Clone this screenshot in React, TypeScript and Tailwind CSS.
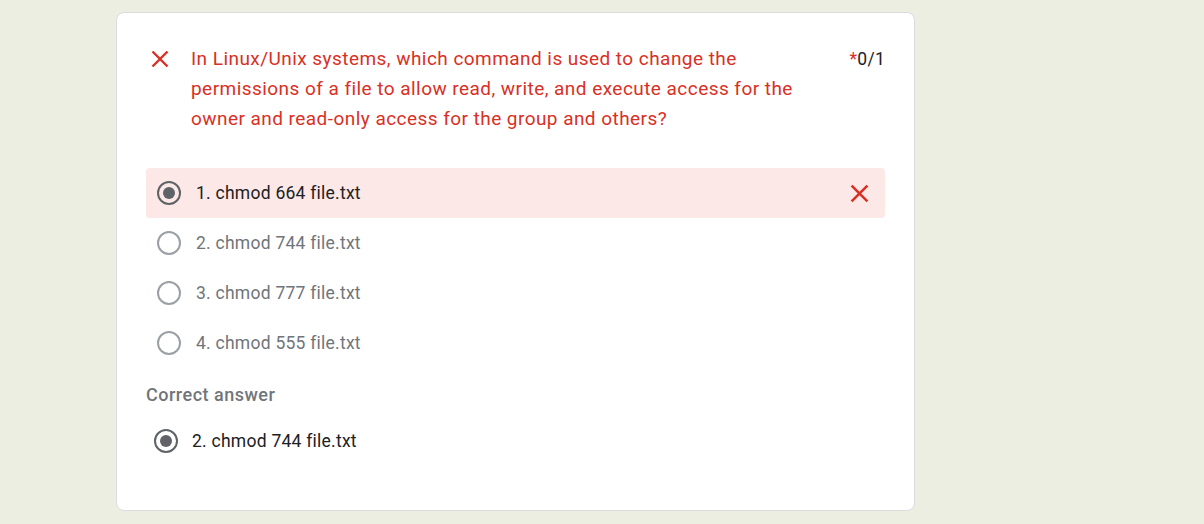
import React from "react";

const options = [
  "1. chmod 664 file.txt",
  "2. chmod 744 file.txt",
  "3. chmod 777 file.txt",
  "4. chmod 555 file.txt",
];

const CloseMark = ({ className }: { className?: string }) => (
  <svg viewBox="0 0 18 18" className={className} fill="none">
    <path d="M1.5 1.5L16.5 16.5M16.5 1.5L1.5 16.5" stroke="currentColor" strokeWidth="2.4" />
  </svg>
);

const Radio = ({ checked }: { checked: boolean }) => (
  <svg viewBox="0 0 24 24" className="h-6 w-6 shrink-0">
    <circle
      cx="12"
      cy="12"
      r="11"
      fill="none"
      stroke={checked ? "#5f6368" : "#9aa0a6"}
      strokeWidth="2"
    />
    {checked && <circle cx="12" cy="12" r="6" fill="#5f6368" />}
  </svg>
);

const App = () => {
  const selected = 0;
  return (
    <div
      className="min-h-[524px] w-full bg-[#ebeee1] pl-[116px] pt-[12px]"
      style={{ fontFamily: "Roboto, 'Liberation Sans', sans-serif" }}
    >
      <div className="w-[799px] rounded-lg border border-[#dadce0] bg-white px-[29px] pb-[49px] pt-[31px]">
        {/* question header */}
        <div className="flex items-start">
          <div className="flex h-[30px] w-[45px] shrink-0 items-center pl-[5px]">
            <CloseMark className="h-[18px] w-[18px] text-[#d93025]" />
          </div>
          <div className="w-[620px] text-[19px] leading-[30px] tracking-[0.45px] text-[#d93025]">
            In Linux/Unix systems, which command is used to change the permissions of a file to allow read, write, and execute access for the owner and read-only access for the group and others?
          </div>
          <div className="ml-auto text-[17.5px] leading-[30px] tracking-[0.25px] text-[#202124]">
            <span className="text-[#d93025]">*</span>0/1
          </div>
        </div>

        {/* options */}
        <div className="mt-[34px] flex flex-col">
          {options.map((item, index) => {
            const isSel = index === selected;
            return (
              <div
                key={index}
                className={`flex h-[50px] items-center rounded pl-[11px] pr-[16px] ${
                  isSel ? "bg-[#fce8e6]" : ""
                }`}
              >
                <Radio checked={isSel} />
                <span
                  className={`ml-[15px] text-[17.5px] tracking-[0.25px] ${
                    isSel ? "text-[#202124]" : "text-[#70757a]"
                  }`}
                >
                  {item}
                </span>
                {isSel && (
                  <CloseMark className="ml-auto h-[19px] w-[19px] text-[#d93025]" />
                )}
              </div>
            );
          })}
        </div>

        <div className="mt-[15px] text-[18px] font-medium leading-[24px] tracking-[0.5px] text-[#70757a]">
          Correct answer
        </div>
        <div className="mt-[14px] flex h-[40px] items-center pl-[8px]">
          <Radio checked={true} />
          <span className="ml-[14px] text-[17.5px] tracking-[0.25px] text-[#202124]">
            2. chmod 744 file.txt
          </span>
        </div>
      </div>
    </div>
  );
};

export default App;
